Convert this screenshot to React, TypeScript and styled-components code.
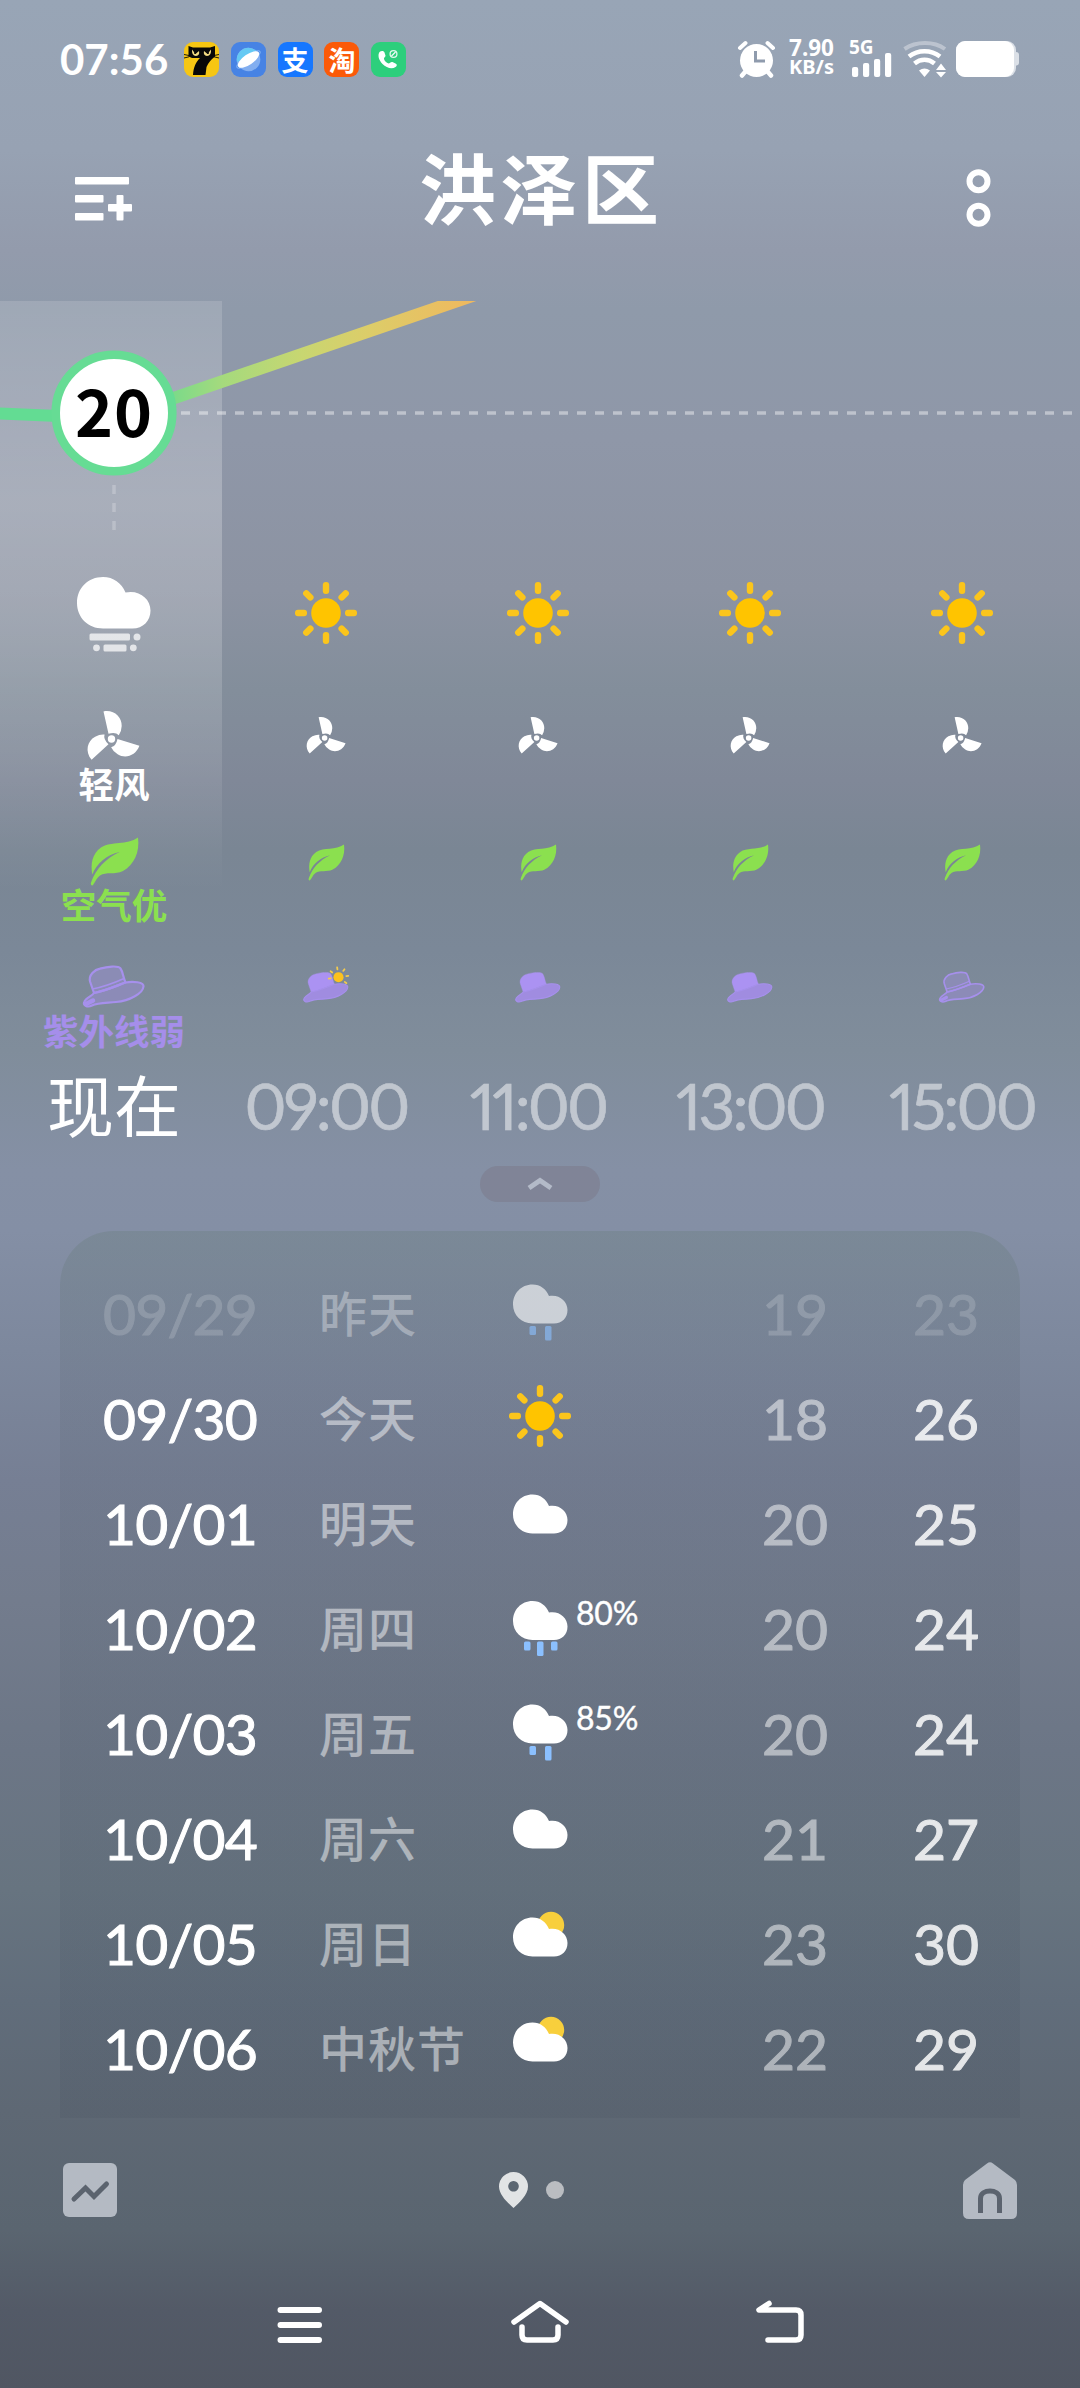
import React from "react";
import styled, { createGlobalStyle } from "styled-components";

const LATIN = '"Lato", "Noto Sans CJK SC", sans-serif';
const HAN = '"Noto Sans CJK SC", "Noto Sans", sans-serif';

const GlobalStyle = createGlobalStyle`
  *, *::before, *::after { box-sizing: border-box; }
  body { margin: 0; background: #505662; }
  svg { display: block; flex: none; overflow: visible; }
`;

const Screen = styled.main`
  width: 1080px;
  height: 2388px;
  overflow: hidden;
  display: flex;
  flex-direction: column;
  color: #fff;
  font-family: ${LATIN};
  background: linear-gradient(
    180deg,
    #98a5b6 0px, #97a2b3 150px, #939bac 250px, #8f9aaa 310px, #8f97a8 440px,
    #8c93a2 590px, #838e9b 690px, #808898 780px, #7a8694 850px, #7b8898 950px,
    #808d9b 1050px, #8590a5 1170px, #848fa5 1230px, #7d889d 1350px,
    #767f94 1480px, #737c8d 1600px, #6c7686 1750px, #677480 1890px,
    #616d7b 2000px, #5e6874 2110px, #5a6570 2230px, #535a67 2310px, #505662 2388px
  );
`;

/* ---------- status bar ---------- */

const StatusBar = styled.header`
  height: 118px;
  padding: 0 61px 0 60px;
  display: flex;
  justify-content: space-between;
`;

const StatusSide = styled.div`
  display: flex;
  align-items: center;
  height: 36px;
  margin-top: 41px;
`;

const Clock = styled.span`
  width: 124px;
  font-size: 42px;
  font-weight: 700;
  line-height: 36px;
`;

const AppBadges = styled.div`
  display: flex;
  gap: 11.8px;
`;

const AppBadge = styled.span<{ $bg: string }>`
  width: 35px;
  height: 35px;
  border-radius: 9px;
  background: ${(p) => p.$bg};
  display: flex;
  align-items: center;
  justify-content: center;
  font: 700 27px/33px ${HAN};
`;

const NetSpeed = styled.div`
  margin: -3px 1px 0 13px;
  width: 47px;
  text-align: center;
  font: 700 22.5px/19px "Noto Sans", sans-serif;
`;

const SpeedUnit = styled.div`
  font-size: 20px;
  line-height: 20px;
`;

const Signal = styled.div`
  position: relative;
  margin-left: 14px;
  width: 45px;
  height: 36px;
`;

const SignalLabel = styled.span`
  position: absolute;
  left: -1px;
  top: -1px;
  font: 700 19px/14px "Noto Sans", sans-serif;
`;

const StatusIcon = styled.svg<{ $gap: number }>`
  margin-left: ${(p) => p.$gap}px;
`;

/* ---------- title bar ---------- */

const TitleBar = styled.div`
  height: 183px;
  padding: 0 89.5px 0 75px;
  display: grid;
  grid-template-columns: 344px 1fr 25px;
`;

const IconButton = styled.button<{ $top: number }>`
  width: max-content;
  height: max-content;
  margin: ${(p) => p.$top}px 0 0;
  padding: 0;
  border: 0;
  background: none;
  color: inherit;
`;

const City = styled.h1`
  margin: 20px 0 0;
  font: 700 77px/96px ${HAN};
  letter-spacing: 4.5px;
  white-space: nowrap;
`;

/* ---------- hourly forecast ---------- */

const Hourly = styled.section`
  height: 865px;
  background: linear-gradient(
      180deg,
      rgba(255, 255, 255, 0.14) 0,
      rgba(255, 255, 255, 0.19) 100px,
      rgba(255, 255, 255, 0.24) 200px,
      rgba(255, 255, 255, 0.18) 340px,
      rgba(255, 255, 255, 0.1) 460px,
      rgba(255, 255, 255, 0) 590px
    )
    0 0 / 222px 600px no-repeat;
`;

const Trend = styled.div`
  height: 239px;
  overflow: hidden;
`;

const HourRow = styled.div<{ $height: number }>`
  height: ${(p) => p.$height}px;
  padding-left: 8px;
  display: grid;
  grid-template-columns: repeat(5, 212px);
`;

const HourCell = styled.div<{ $pad: number; $gap?: number; $color?: string }>`
  padding-top: ${(p) => p.$pad}px;
  display: flex;
  flex-direction: column;
  align-items: center;
  gap: ${(p) => p.$gap ?? 0}px;
  color: ${(p) => p.$color ?? "#fff"};
`;

const GlyphBox = styled.div`
  height: 49px;
  display: flex;
  align-items: center;
`;

const HourLabel = styled.span`
  font: 700 35.5px/36px ${HAN};
  white-space: nowrap;
`;

const HourTime = styled.div`
  text-align: center;
  white-space: nowrap;
  font-size: 64px;
  line-height: 92px;
  letter-spacing: -2.9px;
  font-variant-numeric: proportional-nums;
  -webkit-text-stroke: 0.6px #fff;
  opacity: 0.5;
`;

const NowLabel = styled.div`
  text-align: center;
  font: 400 67px/86px ${HAN};
`;

/* ---------- daily forecast ---------- */

const Handle = styled.button`
  width: 120px;
  height: 36px;
  margin: 0 auto 29px;
  padding: 0;
  border: 0;
  border-radius: 18px;
  background: rgba(120, 115, 130, 0.4);
  display: flex;
  align-items: center;
  justify-content: center;
`;

const DailyCard = styled.section`
  width: 960px;
  height: 887px;
  margin: 0 auto;
  padding: 30px 0 0 43px;
  border-radius: 54px 54px 0 0;
  background: linear-gradient(
    180deg,
    rgba(105, 125, 125, 0.35) 0,
    rgba(95, 105, 120, 0.2) 150px,
    rgba(70, 85, 100, 0.12) 400px,
    rgba(60, 70, 85, 0.13) 887px
  );
`;

const DayRow = styled.div`
  height: 105px;
  display: grid;
  grid-template-columns: 216px 185px 241px 151px 100px;
  align-items: center;
  font-size: 57px;
  line-height: 103px;
`;

const DateText = styled.span<{ $opacity: number }>`
  opacity: ${(p) => p.$opacity};
  letter-spacing: -0.8px;
  white-space: nowrap;
  -webkit-text-stroke: 1px #fff;
`;

const DayName = styled.span<{ $opacity: number }>`
  opacity: ${(p) => p.$opacity};
  margin-top: -6px;
  font: 500 48px/100px ${HAN};
  letter-spacing: 1px;
  white-space: nowrap;
`;

const Sky = styled.div<{ $opacity: number }>`
  display: flex;
  opacity: ${(p) => p.$opacity};
`;

const Chance = styled.span`
  font-size: 32px;
  line-height: 40px;
  letter-spacing: -0.2px;
  -webkit-text-stroke: 0.4px #fff;
`;

const Temp = styled.span<{ $opacity: number }>`
  width: 100px;
  text-align: center;
  opacity: ${(p) => p.$opacity};
  -webkit-text-stroke: 1px #fff;
`;

/* ---------- bottom bars ---------- */

const PagerBar = styled.nav`
  height: 144px;
  padding: 0 63px;
  display: grid;
  grid-template-columns: 1fr auto 1fr;
  align-items: center;
  > :last-child { justify-self: end; }
`;

const Pager = styled.div`
  display: flex;
  align-items: center;
  gap: 18px;
  margin-left: -18px;
`;

const PagerDot = styled.span`
  width: 18px;
  height: 18px;
  border-radius: 50%;
  background: #babdc1;
`;

const SystemNav = styled.nav`
  height: 126px;
  padding: 38px 276px 0;
  display: flex;
  justify-content: space-between;
`;

/* ---------- icons ---------- */

const RAYS = [0, 45, 90, 135, 180, 225, 270, 315];

const Sun = ({ lift = 0 }: { lift?: number }) => (
  <svg width="72" height="72" viewBox={`-36 ${-36 + lift} 72 72`}>
    <circle r="14.8" fill="#ffc400" />
    {RAYS.map((a) => (
      <rect key={a} x="-3.2" y="-31" width="6.4" height="12" rx="3" fill="#fbc51c" transform={`rotate(${a})`} />
    ))}
  </svg>
);

const CLOUD =
  "M19.5 39 C8.5 39 0 30.5 0 20 C0 9 8 0 19.5 0 C27.5 0 33 4.5 36 11.5 C46 9.5 54.5 16.5 54.5 25.5 C54.5 33.5 49 39 41 39 Z";

type SkyKind = "sun" | "cloud" | "rain2" | "rain3" | "cloudsun";

const SkyIcon = ({ kind }: { kind: SkyKind }) => {
  if (kind === "sun") return <Sun lift={3} />;
  const top = kind === "cloudsun" ? 9.5 : kind === "rain3" ? 8 : 6.5;
  return (
    <svg width="72" height="72" viewBox="0 0 72 72">
      {kind === "cloudsun" && <circle cx="47" cy="17" r="13.2" fill="#f8cf3c" />}
      <g transform={`translate(9 ${top})`}>
        <path d={CLOUD} fill="#fff" />
        {kind === "rain2" && (
          <g fill="#8bc0ff">
            <rect x="16.5" y="41.5" width="6.5" height="9" rx="1.5" />
            <rect x="32" y="41.5" width="6.5" height="14.5" rx="1.5" />
          </g>
        )}
        {kind === "rain3" && (
          <g fill="#8bc0ff">
            <rect x="11" y="40.5" width="6.5" height="9" rx="1.5" />
            <rect x="24" y="40.5" width="6.5" height="14.5" rx="1.5" />
            <rect x="38" y="40.5" width="6.5" height="9" rx="1.5" />
          </g>
        )}
      </g>
    </svg>
  );
};

const Fog = () => (
  <svg width="74" height="76" viewBox="0 0 74 76">
    <path
      d="M26 51.5 C11 51.5 0 40.5 0 26 C0 11 11 0 26 0 C36.5 0 44.5 6 48.5 15.5 C62 12.5 73.5 21.5 73.5 33.5 C73.5 44 66 51.5 55.5 51.5 Z"
      fill="#fff"
    />
    <g fill="#fff" opacity="0.72">
      <rect x="12.5" y="56.5" width="40.5" height="7" rx="1.5" />
      <circle cx="60" cy="60" r="3.5" />
      <circle cx="19.5" cy="70.8" r="3.4" />
      <rect x="26.5" y="67.4" width="23" height="7" rx="1.5" />
      <circle cx="56.3" cy="70.8" r="3.4" />
    </g>
  </svg>
);

const Fan = ({ scale }: { scale: number }) => (
  <svg width={52 * scale} height={49 * scale} viewBox="-23.5 -28 52 49">
    <circle r="3.7" fill="#fff" />
    {[0, 120, 240].map((a) => (
      <path
        key={a}
        d="M-8 -27.6 C2.5 -29.5 10.5 -22 10.2 -13 Q10 -7.5 7.3 -3.8 Q3.8 -7.5 -3 -5.2 Z"
        fill="#fff"
        transform={`rotate(${a})`}
      />
    ))}
  </svg>
);

const Leaf = ({ scale }: { scale: number }) => (
  <svg width={49 * scale} height={49 * scale} viewBox="0 0 49 49">
    <path
      fill="#8be04f"
      d="M48 .5 C50 15 44 28 33 34 C25 38 16 34.5 10 38.5 C6 41.5 5 46 2.5 48.5 C1 48.5 .5 47.5 1 45.5 C6 32 15 22 29.5 15 C17 17.5 7 26 2.3 37.5 C.5 27 2 17 11 10.5 C21 4 37 8.5 48 .5 Z"
    />
  </svg>
);

type HatKind = "outline" | "solid" | "sunny";

const Hat = ({ kind, scale }: { kind: HatKind; scale: number }) => {
  const filled = kind !== "outline";
  return (
    <svg width={62 * scale} height={42 * scale} viewBox="0 0 62 42">
      <path
        d="M11 27 L7.2 16 C5 9 12 3.5 17 2.6 C24 .6 35 -.8 37.5 2.5 C40 6 40 11 42.5 16.5 C33 20 22 25 11 27 Z"
        fill="#ab92f2"
        fillOpacity={filled ? 1 : 0.32}
        stroke="#a690ec"
        strokeWidth={filled ? 0.5 : 2.2}
      />
      <path
        d="M42.5 16.5 C50 15 61 16 60.5 20.5 C60 27 47 35 33 36 C24 37 15 36.5 9 39.5 C4 42 -.5 39 1.5 35.5 C3 32 9 30 11 27 C22 25 33 20 42.5 16.5 Z"
        fill="#a28ce4"
        fillOpacity={filled ? 0.95 : 0.4}
        stroke="#a690ec"
        strokeWidth={filled ? 1.5 : 2.2}
      />
      {!filled && (
        <>
          <path d="M9.5 23 C20 21 31 17 41 12.5" fill="none" stroke="#a690ec" strokeWidth="1.6" />
          <path d="M3 38 L10 34.5" stroke="#a690ec" strokeWidth="4.5" strokeLinecap="round" />
        </>
      )}
      {kind === "sunny" && (
        <g transform="translate(48 7)">
          <circle r="6.8" fill="#fdc21d" />
          {[-90, -45, 0, 45, 90, 135].map((a) => (
            <rect
              key={a}
              x="-1.2"
              y="-14.5"
              width="2.4"
              height="5"
              rx="1"
              fill="#f3cb4e"
              transform={`rotate(${a - 8})`}
            />
          ))}
        </g>
      )}
    </svg>
  );
};

const TrendChart = () => (
  <svg width="1080" height="239" viewBox="0 0 1080 239">
    <defs>
      <linearGradient id="warmUp" gradientUnits="userSpaceOnUse" x1="114" y1="0" x2="476" y2="0">
        <stop offset="0.12" stopColor="#6fda8d" />
        <stop offset="0.3" stopColor="#a5da7d" />
        <stop offset="0.52" stopColor="#c8d671" />
        <stop offset="0.7" stopColor="#dccd69" />
        <stop offset="1" stopColor="#f0b85e" />
      </linearGradient>
    </defs>
    <line x1="181" y1="112" x2="1072" y2="112" stroke="#fff" strokeOpacity="0.42" strokeWidth="3.5" strokeDasharray="9 9" />
    <line x1="114" y1="184" x2="114" y2="232" stroke="#fff" strokeOpacity="0.22" strokeWidth="3.5" strokeDasharray="9 9" />
    <line x1="-4" y1="112.3" x2="70" y2="115.5" stroke="#63dc93" strokeWidth="12" />
    <line x1="114" y1="117.7" x2="520" y2="-21.6" stroke="url(#warmUp)" strokeWidth="12.5" />
    <circle cx="114" cy="112" r="58.3" fill="#fff" stroke="#66dc94" strokeWidth="8.6" />
    <text x="114" y="136" textAnchor="middle" fontFamily={HAN} fontWeight="700" fontSize="64.5" letterSpacing="1" fill="#000">
      20
    </text>
  </svg>
);

/* ---------- data ---------- */

const hats: HatKind[] = ["sunny", "solid", "solid", "outline"];
const hours = ["09:00", "11:00", "13:00", "15:00"];

interface Day {
  date: string;
  name: string;
  sky: SkyKind;
  low: number;
  high: number;
  chance?: string;
  past?: boolean;
}

const days: Day[] = [
  { date: "09/29", name: "昨天", sky: "rain2", low: 19, high: 23, past: true },
  { date: "09/30", name: "今天", sky: "sun", low: 18, high: 26 },
  { date: "10/01", name: "明天", sky: "cloud", low: 20, high: 25 },
  { date: "10/02", name: "周四", sky: "rain3", low: 20, high: 24, chance: "80%" },
  { date: "10/03", name: "周五", sky: "rain2", low: 20, high: 24, chance: "85%" },
  { date: "10/04", name: "周六", sky: "cloud", low: 21, high: 27 },
  { date: "10/05", name: "周日", sky: "cloudsun", low: 23, high: 30 },
  { date: "10/06", name: "中秋节", sky: "cloudsun", low: 22, high: 29 },
];

const upcomingTone = { date: 1, name: 0.48, sky: 1, low: 0.5, high: 0.84 };
const pastTone = { date: 0.16, name: 0.32, sky: 0.62, low: 0.18, high: 0.16 };

/* ---------- page ---------- */

const Status = () => (
  <StatusBar>
    <StatusSide>
      <Clock>07:56</Clock>
      <AppBadges>
        <AppBadge $bg="#f6c613">
          <svg width="35" height="35" viewBox="0 0 35 35">
            <path d="M4.5 4 L9 5.5 H26 L31 4 V14.5 Q25 19 22.5 25 L21.5 33 H9 C9.5 25 12 20 16 16 H8 L4.5 14.5 Z" fill="#080808" />
            <path
              d="M0 12.5 L5 13.5 M0 16 L5 14.8 M35 12.5 L30 13.5 M35 16 L30 14.8"
              stroke="#080808"
              strokeWidth="0.9"
            />
            <path
              d="M8 7.5 Q7.5 14 12 14 Q16 13.5 15 9 L11.5 12 Z M27 7.5 Q27.5 14 23 14 Q19 13.5 20 9 L23.5 12 Z"
              fill="#f3dc83"
            />
            <path d="M11 9 V12 M24 9 V12" stroke="#080808" strokeWidth="1.5" />
          </svg>
        </AppBadge>
        <AppBadge $bg="#4783e4">
          <svg width="35" height="35" viewBox="0 0 35 35">
            <circle cx="17.5" cy="17.5" r="11.8" fill="#82aef0" />
            <path d="M6 20 A11.8 11.8 0 0 1 27 10.5 Z" fill="#65c9f3" />
            <ellipse cx="17.5" cy="17.5" rx="14" ry="4" fill="none" stroke="#83b4f5" strokeWidth="1" transform="rotate(-35 17.5 17.5)" />
            <ellipse cx="17.5" cy="17.5" rx="12.5" ry="5.2" fill="#fff" transform="rotate(-35 17.5 17.5)" />
          </svg>
        </AppBadge>
        <AppBadge $bg="#1677ff">支</AppBadge>
        <AppBadge $bg="#fb5a08">淘</AppBadge>
        <AppBadge $bg="#2dcf7c">
          <svg width="35" height="35" viewBox="0 0 35 35">
            <path
              d="M8.5 10 C10 8.5 12.5 8.5 13.3 10 L14.5 13.5 C14.8 15 12.5 15.5 13 17 C13.5 19 15.5 21 17.5 21.5 C19 21.5 19.5 19.5 21.5 20 L24.5 21.5 C26.5 22.5 26 24 24.5 25 C21 27.5 15.5 26 11.5 22 C7.5 18 6.5 13 8.5 10 Z"
              fill="#fff"
            />
            <circle cx="22.5" cy="12" r="3.4" fill="none" stroke="#fff" strokeOpacity="0.85" strokeWidth="1.3" />
            <path d="M20.5 14 L24.5 10" stroke="#fff" strokeWidth="1.1" />
          </svg>
        </AppBadge>
      </AppBadges>
    </StatusSide>
    <StatusSide>
      <svg width="37" height="36" viewBox="0 0 37 36">
        <circle cx="18.5" cy="19.5" r="16.5" fill="#fff" />
        <path d="M2 7 L7.5 2 M35 7 L29.5 2" stroke="#fff" strokeWidth="4" strokeLinecap="round" />
        <path d="M7 31 L4 34.5 M30 31 L33 34.5" stroke="#fff" strokeWidth="4.5" strokeLinecap="round" />
        <path d="M17.5 10 V20 H27" fill="none" stroke="#8f9bad" strokeWidth="3" />
      </svg>
      <NetSpeed>
        7.90
        <SpeedUnit>KB/s</SpeedUnit>
      </NetSpeed>
      <Signal>
        <SignalLabel>5G</SignalLabel>
        <svg width="45" height="36" viewBox="0 0 45 36" fill="#fff">
          <rect x="2" y="26" width="6.2" height="10" rx="2" />
          <rect x="13" y="22" width="6.2" height="14" rx="2" />
          <rect x="24" y="18" width="6.2" height="18" rx="2" />
          <rect x="35" y="12" width="6.2" height="24" rx="2" />
        </svg>
      </Signal>
      <StatusIcon $gap={8} width="44" height="36" viewBox="0 0 44 36" fill="none" stroke="#fff">
        <path d="M1.5 8 C13 0 31 0 42 8" strokeWidth="4" strokeOpacity="0.35" />
        <path d="M6 15.5 C15 8.5 28 8.5 37 15.5" strokeWidth="4.5" />
        <path d="M11.5 22.5 C17.5 17.5 25.5 17.5 31.5 22.5" strokeWidth="4.5" />
        <path d="M16 29.5 Q21.5 25.5 27 29.5 L21.5 36 Z" fill="#fff" stroke="none" />
        <path d="M38 22.5 L43 29 H33 Z M33 31 H43 L38 36.5 Z" fill="#fff" stroke="none" />
      </StatusIcon>
      <StatusIcon $gap={9} width="63" height="36" viewBox="0 0 63 36">
        <rect x="54" y="11" width="9" height="13.5" rx="3" fill="#dbe0e7" />
        <rect x="0" y="0" width="60" height="36" rx="9" fill="#dbe0e7" />
        <rect x="0" y="0" width="58" height="36" rx="9" fill="#fff" />
      </StatusIcon>
    </StatusSide>
  </StatusBar>
);

const DayLine = ({ day }: { day: Day }) => {
  const tone = day.past ? pastTone : upcomingTone;
  return (
    <DayRow>
      <DateText $opacity={tone.date}>{day.date}</DateText>
      <DayName $opacity={tone.name}>{day.name}</DayName>
      <Sky $opacity={tone.sky}>
        <SkyIcon kind={day.sky} />
        {day.chance && <Chance>{day.chance}</Chance>}
      </Sky>
      <Temp $opacity={tone.low}>{day.low}</Temp>
      <Temp $opacity={tone.high}>{day.high}</Temp>
    </DayRow>
  );
};

export default function App() {
  return (
    <Screen>
      <GlobalStyle />
      <Status />

      <TitleBar>
        <IconButton $top={58.5} aria-label="menu">
          <svg width="57" height="44" viewBox="0 0 57 44" fill="#fff">
            <rect x="0" y="0" width="54" height="7.5" rx="1" />
            <rect x="0" y="18" width="28.5" height="7.5" rx="1" />
            <rect x="0" y="36" width="28.5" height="7.5" rx="1" />
            <rect x="33" y="27" width="24" height="7.5" rx="1" />
            <rect x="41.5" y="18" width="7" height="25.5" rx="1" />
          </svg>
        </IconButton>
        <City>洪泽区</City>
        <IconButton $top={51} aria-label="more">
          <svg width="25" height="58" viewBox="0 0 25 58" fill="none" stroke="#fff" strokeWidth="6">
            <circle cx="12.5" cy="12.3" r="9" />
            <circle cx="12.5" cy="45.7" r="9" />
          </svg>
        </IconButton>
      </TitleBar>

      <Hourly>
        <Trend>
          <TrendChart />
        </Trend>
        <HourRow $height={145}>
          <HourCell $pad={37}><Fog /></HourCell>
          {hours.map((h) => (
            <HourCell key={h} $pad={36.5}><Sun /></HourCell>
          ))}
        </HourRow>
        <HourRow $height={127}>
          <HourCell $pad={26} $gap={5}>
            <GlyphBox><Fan scale={1} /></GlyphBox>
            <HourLabel>轻风</HourLabel>
          </HourCell>
          {hours.map((h) => (
            <HourCell key={h} $pad={26}><GlyphBox><Fan scale={0.75} /></GlyphBox></HourCell>
          ))}
        </HourRow>
        <HourRow $height={120}>
          <HourCell $pad={25} $color="#8be04f">
            <GlyphBox><Leaf scale={1} /></GlyphBox>
            <HourLabel>空气优</HourLabel>
          </HourCell>
          {hours.map((h) => (
            <HourCell key={h} $pad={26}><GlyphBox><Leaf scale={0.75} /></GlyphBox></HourCell>
          ))}
        </HourRow>
        <HourRow $height={128}>
          <HourCell $pad={30.5} $color="#a58eea">
            <GlyphBox><Hat kind="outline" scale={1} /></GlyphBox>
            <HourLabel>紫外线弱</HourLabel>
          </HourCell>
          {hats.map((kind, i) => (
            <HourCell key={i} $pad={31}><GlyphBox><Hat kind={kind} scale={0.74} /></GlyphBox></HourCell>
          ))}
        </HourRow>
        <HourRow $height={92}>
          <NowLabel>现在</NowLabel>
          {hours.map((h) => (
            <HourTime key={h}>{h}</HourTime>
          ))}
        </HourRow>
      </Hourly>

      <Handle aria-label="collapse">
        <svg width="26" height="14" viewBox="0 0 26 14">
          <path d="M2 11 L13 3.5 L24 11" fill="none" stroke="#b3bac8" strokeWidth="5" />
        </svg>
      </Handle>

      <DailyCard>
        {days.map((day) => (
          <DayLine key={day.date} day={day} />
        ))}
      </DailyCard>

      <PagerBar>
        <svg width="54" height="54" viewBox="0 0 54 54">
          <rect width="54" height="54" rx="6" fill="#b4bac3" />
          <path d="M11 36 L22.5 25 L31 33.5 L43.5 21" fill="none" stroke="#5b636e" strokeWidth="5" strokeLinecap="round" />
        </svg>
        <Pager>
          <svg width="29" height="36" viewBox="0 0 29 36">
            <path
              fillRule="evenodd"
              d="M14.5 36 C9 31 0 23 0 14.5 A14.5 14.5 0 0 1 29 14.5 C29 23 20 31 14.5 36 Z M14.5 9 a5.3 5.3 0 1 0 .01 0 Z"
              fill="#e2e4e5"
            />
          </svg>
          <PagerDot />
        </Pager>
        <svg width="54" height="57" viewBox="0 0 54 57">
          <path d="M24 1.5 Q27 -1 30 1.5 L52 18 Q54 20 54 23 V51 Q54 57 48 57 H6 Q0 57 0 51 V23 Q0 20 2 18 Z" fill="#b4bac3" />
          <path d="M17.5 51 V36.5 C17.5 26.5 36.5 26.5 36.5 36.5 V51" fill="none" stroke="#5b636e" strokeWidth="5" />
        </svg>
      </PagerBar>

      <SystemNav>
        <svg width="47" height="44" viewBox="0 0 47 44" stroke="#fff" strokeWidth="6" strokeLinecap="round">
          <path d="M4.5 10 H43 M4.5 25 H43 M4.5 40 H43" />
        </svg>
        <svg width="58" height="44" viewBox="0 0 58 44" fill="none" stroke="#fff" strokeWidth="5.5" strokeLinecap="round" strokeLinejoin="round">
          <path d="M3 22 L29 3.5 L55 22" />
          <path d="M11 27 V35 Q11 40 16 40 H42 Q47 40 47 35 V27" />
        </svg>
        <svg width="48" height="44" viewBox="0 0 48 44" fill="none" stroke="#fff" strokeWidth="5.5" strokeLinecap="round" strokeLinejoin="round">
          <path d="M13 3.5 L3 10 H40 Q45 10 45 15 V35 Q45 40 40 40 H12" />
        </svg>
      </SystemNav>
    </Screen>
  );
}
